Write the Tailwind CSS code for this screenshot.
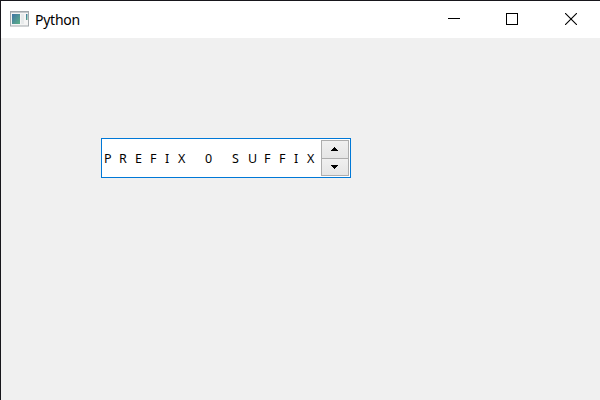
<!DOCTYPE html>
<html lang="en">
<head>
<meta charset="utf-8">
<title>Python</title>
<script src="https://cdn.jsdelivr.net/npm/@tailwindcss/browser@4"></script>
</head>
<body class="w-[600px] h-[400px] overflow-hidden flex flex-col bg-[#f0f0f0] border-t border-l border-[#17161b] text-black">
  <header class="h-[37px] shrink-0 bg-white flex items-center pl-[9px] pr-[23px]">
    <svg class="shrink-0 -mt-px" width="19" height="16" viewBox="0 0 19 16">
      <defs><linearGradient id="pane" x1="0" y1="0" x2="1" y2="1"><stop offset="0" stop-color="#3f73a5"/><stop offset="1" stop-color="#5db287"/></linearGradient></defs>
      <rect x=".5" y=".5" width="18" height="14.5" fill="#f5f5f5" stroke="#a2a8ac"/>
      <path d="M1 1.5h17" stroke="#c5c9cc"/>
      <rect x="2" y="3" width="8" height="10" fill="url(#pane)"/>
      <path d="M11 3h3v10h-3z" fill="#e7eaeb"/>
      <rect x="16" y="3" width="1.5" height="6" fill="url(#pane)"/>
    </svg>
    <h1 class="ml-[6px] font-['Noto_Sans',sans-serif] text-[14px] leading-5 tracking-[-0.25px]">Python</h1>
    <div class="ml-auto flex items-center gap-[46px] pb-[2px]">
      <svg width="12" height="12" viewBox="0 0 12 12" shape-rendering="crispEdges"><path d="M0 5h12v1H0z"/></svg>
      <svg width="12" height="12" viewBox="0 0 12 12" fill="none" stroke="#000" shape-rendering="crispEdges"><path d="M.5.5h11v11H.5z"/></svg>
      <svg class="ml-px" width="12" height="12" viewBox="0 0 12 12" fill="none" stroke="#000" stroke-width="1.1"><path d="M0 0l12 12M12 0L0 12"/></svg>
    </div>
  </header>
  <main class="flex-1 pt-[100px] pl-[100px]">
    <div class="w-[250px] h-10 border border-[#0078d7] bg-white flex items-center pr-px">
      <div class="flex font-['Noto_Sans',sans-serif] text-[12.5px] leading-5 pl-[2px] pt-[2px]">
        <span class="w-[15px]">P</span><span class="w-4">R</span><span class="w-[15px]">E</span><span class="w-[15px]">F</span><span class="w-[13px]">I</span><span class="w-[27px]">X</span>
        <span class="w-[27px]">0</span>
        <span class="w-4">S</span><span class="w-4">U</span><span class="w-[15px]">F</span><span class="w-[15px]">F</span><span class="w-[13px]">I</span><span>X</span>
      </div>
      <div class="ml-auto w-7 h-9 shrink-0 border border-[#adadad] flex flex-col">
        <button class="h-[17px] pr-[2px] flex items-center justify-center bg-linear-to-b from-[#f0f0f0] to-[#e5e5e5]" aria-label="Increase"><svg class="-mt-px" width="7" height="4" viewBox="0 0 7 4" shape-rendering="crispEdges"><path d="M3 0h1v1h1v1h1v1h1v1H0V3h1V2h1V1h1z"/></svg></button>
        <button class="h-[17px] pr-[2px] border-t border-[#adadad] flex items-center justify-center bg-linear-to-b from-[#f0f0f0] to-[#e5e5e5]" aria-label="Decrease"><svg width="7" height="4" viewBox="0 0 7 4" shape-rendering="crispEdges"><path d="M0 0h7v1H6v1H5v1H4v1H3V3H2V2H1V1H0z"/></svg></button>
      </div>
    </div>
  </main>
</body>
</html>
